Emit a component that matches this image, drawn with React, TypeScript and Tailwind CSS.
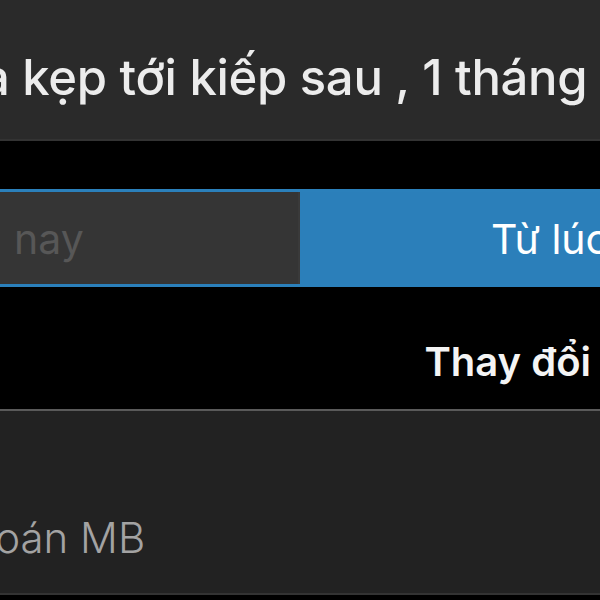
import React from "react";

export default function App() {
  const font = { fontFamily: "Inter, 'Noto Sans', sans-serif" };
  return (
    <div className="w-[600px] h-[600px] bg-black overflow-hidden flex flex-col" style={font}>
      <div className="h-[141px] shrink-0 bg-[#2a2a2a] border-b-2 border-[#333333] flex items-end pb-[37px] overflow-hidden">
        <span className="whitespace-nowrap text-[49px] leading-none font-medium text-[#ececec] -ml-[18px] tracking-[-0.3px]">
          a kẹp tới kiếp sau , 1 tháng
        </span>
      </div>
      <div className="h-[48px] shrink-0" />
      <div className="h-[98px] shrink-0 flex border-y-[3px] border-[#2b80bb] overflow-hidden">
        <div className="w-[300px] shrink-0 bg-[#353535] border-r-2 border-[#3a3a3a] flex items-center pl-[14px] pt-[2px]">
          <span className="text-[41px] leading-none text-[#575757] whitespace-nowrap">nay</span>
        </div>
        <div className="flex-1 bg-[#2b7fba] flex items-center pl-[191px] pt-[2px]">
          <span className="text-[41px] leading-none text-white whitespace-nowrap">Từ lúc</span>
        </div>
      </div>
      <div className="h-[122px] shrink-0 flex items-center justify-end pr-[9px] pt-[28px]">
        <span className="text-[40px] leading-none font-semibold text-[#f4f4f4] whitespace-nowrap">Thay đổi</span>
      </div>
      <div className="h-[186px] shrink-0 bg-[#222222] border-t-2 border-[#5a5a5a] border-b-2 border-b-[#333333] flex items-end pb-[34px] overflow-hidden">
        <span className="text-[42px] leading-none font-light text-[#a3a3a3] whitespace-nowrap -ml-[17px]">toán MB</span>
      </div>
    </div>
  );
}
